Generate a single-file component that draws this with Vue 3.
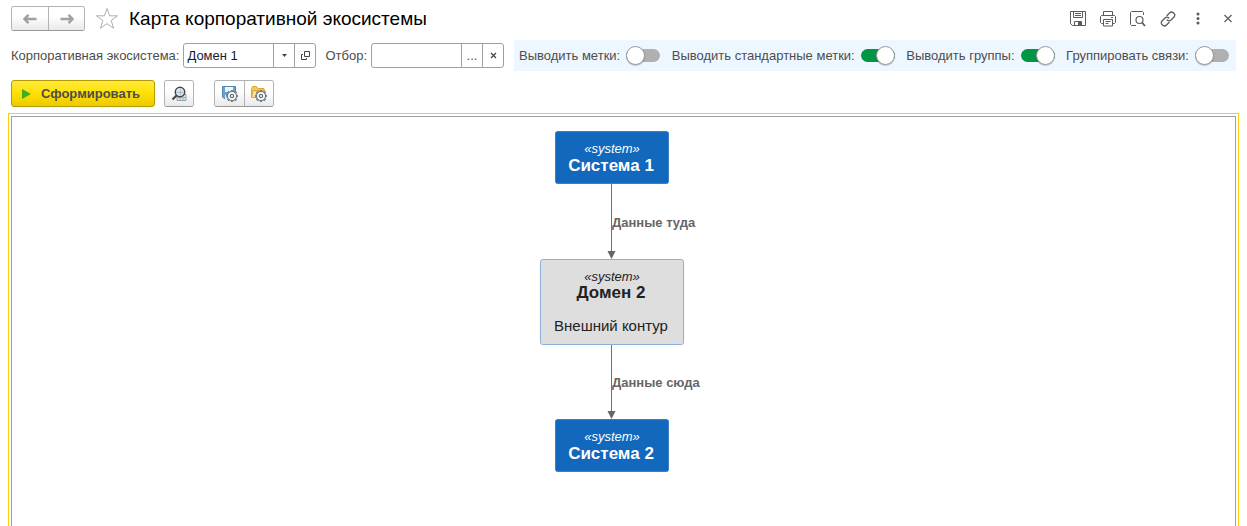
<script setup>
import { ref } from 'vue'

const ecosystem = ref('Домен 1')
const filter = ref('')
const switches = ref([
  { id: 'marks', label: 'Выводить метки:', on: false },
  { id: 'std-marks', label: 'Выводить стандартные метки:', on: true },
  { id: 'groups', label: 'Выводить группы:', on: true },
  { id: 'links', label: 'Группировать связи:', on: false },
])

const gearTeeth = [0, 45, 90, 135, 180, 225, 270, 315]
</script>

<template>
  <div class="page">
    <header class="title-bar">
      <div class="group nav">
        <button type="button" class="btn" aria-label="Назад">
          <svg width="14" height="10" viewBox="0 0 14 10"><path d="M5.500 .8 1.500 5l4 4.200M2 5h11.500" fill="none" stroke="#a0a0a0" stroke-width="2.400" /></svg>
        </button>
        <button type="button" class="btn" aria-label="Вперёд">
          <svg width="14" height="10" viewBox="0 0 14 10"><path d="M8.500 .8l4 4.200-4 4.200M12 5H.5" fill="none" stroke="#a0a0a0" stroke-width="2.400" /></svg>
        </button>
      </div>
      <button type="button" class="plain star" aria-label="В избранное">
        <svg width="24" height="23" viewBox="0 0 24 23"><path d="M12 1.500 14.600 8.800H22.500L16.200 13.500 18.600 21.300 12 16.600 5.400 21.300 7.800 13.500 1.500 8.800H9.400Z" fill="#fff" stroke="#aab0b5" /></svg>
      </button>
      <h1>Карта корпоративной экосистемы</h1>
      <div class="tools">
        <button type="button" class="plain" aria-label="Сохранить">
          <svg width="16" height="16" viewBox="0 0 16 16" fill="none" stroke="#5c5c5c"><path d="M.5 .5h15v14H2.500l-2-2zM3.500 .5v6h9v-6M5 2.500h6M5 4.500h6M4.500 14.500v-4h7v4" /><path d="M8 11h3v3H8z" fill="#5c5c5c" stroke="none" /></svg>
        </button>
        <button type="button" class="plain" aria-label="Печать">
          <svg width="16" height="16" viewBox="0 0 16 16" fill="none" stroke="#5c5c5c"><path d="M3.500 4V.5h9V4M3.500 12.500h-2l-1-1v-6l1-1h13l1 1v6l-1 1h-2" /><path d="M3.500 8.500h9v6.500h-9zM5.500 10.500h5M5.500 12.500h3M11 6.500h2" /></svg>
        </button>
        <button type="button" class="plain" aria-label="Предварительный просмотр">
          <svg width="16" height="16" viewBox="0 0 16 16" fill="none" stroke="#5c5c5c"><path d="M13.500 4V1.500l-1-1H1.500l-1 1v12l1 1H6" /><circle cx="9.500" cy="9" r="3.500" stroke-width="1.200" /><path d="m12 11.500 3 3.500" stroke-width="1.800" /></svg>
        </button>
        <button type="button" class="plain" aria-label="Получить ссылку">
          <svg width="16" height="16" viewBox="0 0 16 16" fill="none" stroke="#5c5c5c" stroke-width="1.300" stroke-linecap="round"><path d="M7 4.500 9.500 2C12 -.5 16.500 3 14 6l-3 3c-1.200 1.100-2.800 1-3.800 0" /><path d="M9 11.500 6.500 14C4 16.500 -.5 13 2 10l3-3c1.200-1.100 2.800-1 3.800 0" /></svg>
        </button>
        <button type="button" class="plain" aria-label="Ещё">
          <svg width="16" height="16" viewBox="0 0 16 16" fill="#5c5c5c"><circle cx="8" cy="3" r="1.500" /><circle cx="8" cy="7.500" r="1.500" /><circle cx="8" cy="12" r="1.500" /></svg>
        </button>
        <button type="button" class="plain" aria-label="Закрыть">
          <svg width="16" height="16" viewBox="0 0 16 16"><path d="m4.500 4 7 7m0-7-7 7" stroke="#5c5c5c" stroke-width="1.200" /></svg>
        </button>
      </div>
    </header>

    <div class="params">
      <label for="ecosystem">Корпоративная экосистема:</label>
      <div class="field">
        <div class="select-wrap">
          <select id="ecosystem" v-model="ecosystem">
            <option>Домен 1</option>
            <option>Домен 2</option>
          </select>
          <span class="caret"><svg width="5" height="3" viewBox="0 0 5 3"><path d="M0 0h5L2.500 3z" fill="#444" /></svg></span>
        </div>
        <button type="button" aria-label="Открыть">
          <svg width="9" height="9" viewBox="0 0 9 9" fill="none" stroke="#444"><path d="M3.500 .5h5v5h-5zM2 3.500H.5v5h5V7" /></svg>
        </button>
      </div>
      <label class="second" for="filter">Отбор:</label>
      <div class="field">
        <input id="filter" v-model="filter" type="text">
        <button type="button" aria-label="Выбрать">...</button>
        <button type="button" aria-label="Очистить" @click="filter = ''">
          <svg width="7" height="7" viewBox="0 0 7 7"><path d="m1 1 5 5m0-5-5 5" stroke="#444" stroke-width="1.200" /></svg>
        </button>
      </div>
      <div class="switches">
        <div v-for="s in switches" :key="s.id" class="switch">
          <label :for="s.id">{{ s.label }}</label>
          <input :id="s.id" v-model="s.on" type="checkbox" role="switch">
        </div>
      </div>
    </div>

    <div class="commands">
      <button type="button" class="run">
        <svg width="9" height="10" viewBox="0 0 9 10"><path d="M0 0l9 5-9 5z" fill="#3fae1a" /></svg>
        Сформировать
      </button>
      <div class="group">
        <button type="button" class="btn" aria-label="Расшифровка">
          <svg width="16" height="16" viewBox="0 0 16 16"><path d="M6 8.500h9v6H6z" fill="#d5e3ea" stroke="#8fa5b2" /><path d="M9 9v5m3-5v5M6 11.500h9" stroke="#a3b6c2" /><circle cx="9" cy="6" r="4.700" fill="#dce8ef" stroke="#444" stroke-width="1.500" /><path d="M6 6.500h6M9.500 3v6" stroke="#a7bac5" /><path d="M5.500 9.500 1.500 13.500" stroke="#444" stroke-width="2.200" /></svg>
        </button>
      </div>
      <div class="group variants">
        <button type="button" class="btn" aria-label="Сохранить вариант">
          <svg width="18" height="18" viewBox="0 0 18 18"><path d="M1.500 1.500h13v12H3l-1.500-1.500z" fill="#6ba2cf" stroke="#4f86b4" /><path d="M4 2h8v5H4z" fill="#eef6fc" /><path d="M4 10h5v4H4z" fill="#dceaf5" /><g stroke="#66717a" fill="#fff"><path v-for="a in gearTeeth" :key="a" d="M10.200 7.500V5.500h1.600v2" :transform="`rotate(${a} 11 11)`" /><circle cx="11" cy="11" r="4.500" /><circle cx="11" cy="11" r="1.700" stroke-width="1.300" /></g></svg>
        </button>
        <button type="button" class="btn" aria-label="Выбрать вариант">
          <svg width="18" height="18" viewBox="0 0 18 18"><path d="M1.500 12.500v-9l1-2h4l1.500 2h6v9z" fill="#f5c85b" stroke="#dca63a" /><path d="M3 5.500h12l-1.500 7h-12z" fill="#ffe092" stroke="#dca63a" /><g stroke="#66717a" fill="#fff"><path v-for="a in gearTeeth" :key="a" d="M10.200 7.500V5.500h1.600v2" :transform="`rotate(${a} 11 11)`" /><circle cx="11" cy="11" r="4.500" /><circle cx="11" cy="11" r="1.700" stroke-width="1.300" /></g></svg>
        </button>
      </div>
    </div>

    <main class="frame">
      <div class="canvas">
        <svg class="diagram" width="168" height="342" viewBox="0 0 168 342">
          <g class="edge">
            <path d="M71.500 53v68M71.500 213v68" />
            <path class="head" d="M67.500 120h8l-4 8zM67.500 280h8l-4 8z" />
            <text x="72" y="96">Данные туда</text>
            <text x="72" y="256">Данные сюда</text>
          </g>
          <g class="node">
            <rect x="15.500" y=".5" width="113" height="52" rx="2" />
            <text class="kind" x="72" y="22">«system»</text>
            <text class="name" x="71" y="40">Система 1</text>
          </g>
          <g class="node external">
            <rect x=".5" y="128.500" width="143" height="85" rx="2" />
            <text class="kind" x="72" y="150">«system»</text>
            <text class="name" x="71" y="167">Домен 2</text>
            <text class="note" x="71" y="200">Внешний контур</text>
          </g>
          <g class="node">
            <rect x="15.500" y="288.500" width="113" height="52" rx="2" />
            <text class="kind" x="72" y="310">«system»</text>
            <text class="name" x="71" y="328">Система 2</text>
          </g>
        </svg>
      </div>
    </main>
  </div>
</template>

<style>
body {
  margin: 0;
  background: #fff;
}
</style>

<style scoped>
.page {
  display: flex;
  flex-direction: column;
  height: 100vh;
  overflow: hidden;
  box-sizing: border-box;
  padding: 6px 8px 0;
  font-family: "Liberation Sans", Arial, sans-serif;
  font-size: 13px;
  color: #4d4d4d;
}

button,
input,
select {
  box-sizing: border-box;
  margin: 0;
  padding: 0;
  font: inherit;
  color: inherit;
}

svg {
  display: block;
}

.title-bar {
  display: flex;
  align-items: center;
  height: 25px;
  padding: 0 3px;
}

.group {
  display: flex;
  box-sizing: border-box;
  height: 27px;
  border: 1px solid #b3b3b3;
  border-bottom-color: #999;
  border-radius: 3px;
  overflow: hidden;
}

.btn {
  display: flex;
  align-items: center;
  justify-content: center;
  width: 28px;
  border: 0;
  background: linear-gradient(#fff, #fff 40%, #e9e9e9);
}

.btn + .btn {
  border-left: 1px solid #b3b3b3;
}

.variants .btn {
  width: 29px;
}

.nav {
  height: 25px;
}

.nav .btn {
  width: 36px;
}

.plain {
  border: 0;
  background: none;
}

.star {
  margin-left: 10px;
}

h1 {
  margin: 0 0 0 10px;
  font-size: 19px;
  font-weight: 400;
  line-height: 24px;
  color: #000;
}

.tools {
  display: flex;
  gap: 14px;
  margin-left: auto;
}

.params {
  display: flex;
  align-items: center;
  height: 31px;
  margin-top: 9px;
  padding: 0 3px;
  white-space: nowrap;
}

.field {
  display: flex;
  box-sizing: border-box;
  width: 133px;
  height: 25px;
  margin-left: 4px;
  border: 1px solid #a0a0a0;
  border-radius: 3px;
  background: #fff;
}

.field input,
.select-wrap {
  flex: 1;
  min-width: 0;
  border: 0;
}

.field input {
  padding: 0 3px;
  background: none;
}

.select-wrap {
  position: relative;
}

select {
  width: 100%;
  height: 100%;
  padding: 0 24px 0 3px;
  border: 0;
  background: none;
  appearance: none;
  color: #1a1a2e;
}

.caret,
.field button {
  display: flex;
  align-items: center;
  justify-content: center;
  box-sizing: border-box;
  width: 21px;
  border: 0;
  border-left: 1px solid #a0a0a0;
  background: none;
}

.caret {
  position: absolute;
  inset: 0 0 0 auto;
  pointer-events: none;
}

.second {
  margin-left: 9px;
}

.switches {
  display: flex;
  align-items: center;
  justify-content: space-between;
  flex: 1;
  height: 31px;
  margin-left: 10px;
  padding: 0 7px 0 5px;
  background: #eef7ff;
}

.switch {
  display: flex;
  align-items: center;
  gap: 6px;
}

.switch input {
  display: flex;
  align-items: center;
  width: 34px;
  height: 13px;
  border-radius: 7px;
  background: #b0b0b0;
  appearance: none;
}

.switch input::before {
  content: "";
  box-sizing: border-box;
  width: 19px;
  height: 19px;
  flex: none;
  border: 1px solid #9a9a9a;
  border-radius: 50%;
  background: #fff;
  box-shadow: 0 1px 1px #0003;
}

.switch input:checked {
  justify-content: flex-end;
  background: #009646;
}

.commands {
  display: flex;
  align-items: center;
  margin-top: 9px;
  padding: 0 3px;
}

.run {
  display: flex;
  align-items: center;
  gap: 10px;
  height: 27px;
  margin-right: 9px;
  padding: 0 14px 0 10px;
  border: 1px solid #b39b00;
  border-radius: 3px;
  background: linear-gradient(#ffea3d, #ffe000 50%, #ecca00);
  font-weight: 700;
}

.variants {
  margin-left: 20px;
}

.frame {
  display: flex;
  flex: 1;
  min-height: 0;
  margin-top: 6px;
  padding: 2px 2px 0;
  border: 1px solid #ffcc14;
  border-bottom: 0;
}

.canvas {
  flex: 1;
  padding-top: 14px;
  border: 1px solid #a0a0a0;
  border-bottom: 0;
}

.diagram {
  margin: 0 auto;
}

.edge path {
  fill: none;
  stroke: #707070;
}

.edge .head {
  fill: #666;
  stroke: none;
}

.edge text {
  font-size: 13px;
  font-weight: 700;
  fill: #666;
}

.node rect {
  fill: #1168bd;
  stroke: #3c7fc0;
}

.node text {
  text-anchor: middle;
  fill: #fff;
}

.node .kind {
  font-size: 13px;
  font-style: italic;
}

.node .name {
  font-size: 17px;
  font-weight: 700;
}

.node .note {
  font-size: 15px;
}

.external rect {
  fill: #dedede;
  stroke: #8ab0d8;
}

.node.external text {
  fill: #222;
}
</style>
